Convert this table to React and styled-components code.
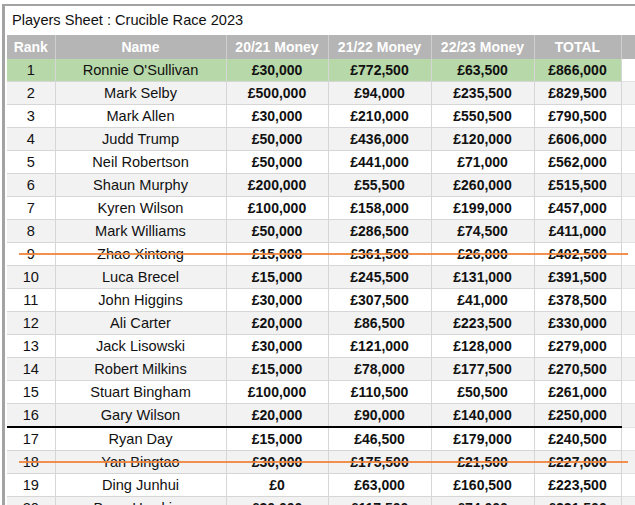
import React from 'react'
import styled, { createGlobalStyle } from 'styled-components'

const Global = createGlobalStyle`
  body {
    margin: 0;
    background: #ffffff;
    font-family: "Liberation Sans", Arial, sans-serif;
    overflow: hidden;
  }
`

const Frame = styled.div`
  margin: 4px 0 0 2px;
  border-top: 2px solid #a3a3a3;
  border-left: 3px solid #a3a3a3;
  padding-left: 2px;
  width: 640px;
`

const Title = styled.div`
  height: 29px;
  line-height: 29px;
  padding-left: 5px;
  font-size: 14.6px;
  color: #111;
`

const Sheet = styled.table`
  border-collapse: collapse;
  table-layout: fixed;
  width: 640px;
  font-size: 14px;
  color: #111;
`

const Head = styled.th`
  height: 24px;
  padding: 0;
  background: #b5b5b5;
  color: #fff;
  font-weight: bold;
  border-left: 1px solid #cfcfcf;
  border-right: 1px solid #cfcfcf;
  &:first-child { border-left: none; }
`

const Row = styled.tr`
  background: ${p => (p.$top ? '#b7d8a8' : p.$shade ? '#f2f2f2' : '#ffffff')};
`

const Cell = styled.td`
  position: relative;
  height: 22px;
  padding: 0;
  text-align: center;
  font-size: ${p => (p.$bold ? '14px' : '14.6px')};
  font-weight: ${p => (p.$bold ? 'bold' : 'normal')};
  border-left: 1px solid #d6d6d6;
  border-right: 1px solid #d6d6d6;
  border-bottom: ${p => (p.$cut ? '2px solid #000' : '1px solid #d6d6d6')};
  white-space: nowrap;
  &:first-child { border-left: none; }
`

const Spare = styled.td`
  padding: 0;
  background: ${p => (p.$shade ? '#f2f2f2' : '#ffffff')};
  border-bottom: 1px solid #e2e2e2;
`

const Strike = styled.span`
  position: absolute;
  left: 12px;
  top: 50%;
  width: 609px;
  height: 2px;
  margin-top: -1px;
  background: #f0843c;
  opacity: 0.9;
  z-index: 2;
`

const players = [
  [1, "Ronnie O'Sullivan", '£30,000', '£772,500', '£63,500', '£866,000'],
  [2, 'Mark Selby', '£500,000', '£94,000', '£235,500', '£829,500'],
  [3, 'Mark Allen', '£30,000', '£210,000', '£550,500', '£790,500'],
  [4, 'Judd Trump', '£50,000', '£436,000', '£120,000', '£606,000'],
  [5, 'Neil Robertson', '£50,000', '£441,000', '£71,000', '£562,000'],
  [6, 'Shaun Murphy', '£200,000', '£55,500', '£260,000', '£515,500'],
  [7, 'Kyren Wilson', '£100,000', '£158,000', '£199,000', '£457,000'],
  [8, 'Mark Williams', '£50,000', '£286,500', '£74,500', '£411,000'],
  [9, 'Zhao Xintong', '£15,000', '£361,500', '£26,000', '£402,500'],
  [10, 'Luca Brecel', '£15,000', '£245,500', '£131,000', '£391,500'],
  [11, 'John Higgins', '£30,000', '£307,500', '£41,000', '£378,500'],
  [12, 'Ali Carter', '£20,000', '£86,500', '£223,500', '£330,000'],
  [13, 'Jack Lisowski', '£30,000', '£121,000', '£128,000', '£279,000'],
  [14, 'Robert Milkins', '£15,000', '£78,000', '£177,500', '£270,500'],
  [15, 'Stuart Bingham', '£100,000', '£110,500', '£50,500', '£261,000'],
  [16, 'Gary Wilson', '£20,000', '£90,000', '£140,000', '£250,000'],
  [17, 'Ryan Day', '£15,000', '£46,500', '£179,000', '£240,500'],
  [18, 'Yan Bingtao', '£30,000', '£175,500', '£21,500', '£227,000'],
  [19, 'Ding Junhui', '£0', '£63,000', '£160,500', '£223,500'],
  [20, 'Barry Hawkins', '£30,000', '£117,500', '£74,000', '£221,500'],
]

const struck = [9, 18]

export default function App() {
  return (
    <>
      <Global />
      <Frame>
        <Title>Players Sheet : Crucible Race 2023</Title>
        <Sheet>
          <colgroup>
            <col style={{ width: 48 }} />
            <col style={{ width: 171 }} />
            <col style={{ width: 102 }} />
            <col style={{ width: 103 }} />
            <col style={{ width: 103 }} />
            <col style={{ width: 87 }} />
            <col />
          </colgroup>
          <thead>
            <tr>
              <Head>Rank</Head>
              <Head>Name</Head>
              <Head>20/21 Money</Head>
              <Head>21/22 Money</Head>
              <Head>22/23 Money</Head>
              <Head>TOTAL</Head>
              <Head />
            </tr>
          </thead>
          <tbody>
            {players.map(([rank, name, a, b, c, total]) => {
              const cut = rank === 16
              return (
                <Row key={rank} $top={rank === 1} $shade={rank % 2 === 0}>
                  <Cell $cut={cut}>
                    {rank}
                    {struck.includes(rank) && <Strike />}
                  </Cell>
                  <Cell $cut={cut}>{name}</Cell>
                  <Cell $cut={cut} $bold>{a}</Cell>
                  <Cell $cut={cut} $bold>{b}</Cell>
                  <Cell $cut={cut} $bold>{c}</Cell>
                  <Cell $cut={cut} $bold>{total}</Cell>
                  <Spare $shade={rank % 2 === 0} />
                </Row>
              )
            })}
          </tbody>
        </Sheet>
      </Frame>
    </>
  )
}
